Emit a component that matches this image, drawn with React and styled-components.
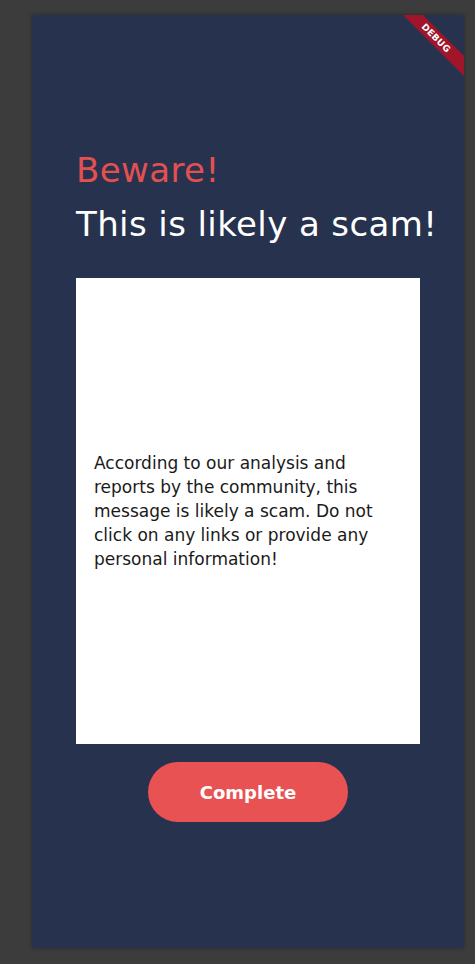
import React from 'react'
import styled, { createGlobalStyle } from 'styled-components'

const Global = createGlobalStyle`
  html, body {
    margin: 0;
    padding: 0;
    background: #3c3c3c;
  }
  body {
    font-family: "DejaVu Sans", "Noto Sans", sans-serif;
    height: 964px;
    overflow: hidden;
  }
`

const Screen = styled.div`
  position: relative;
  box-sizing: border-box;
  margin: 15px 11px 0 32px;
  height: 933px;
  background: #26324e;
  box-shadow: 0 0 4px rgba(0, 0, 0, 0.35);
  overflow: hidden;
  padding: 128px 44px 0;
  display: flex;
  flex-direction: column;
`

const Banner = styled.div`
  position: absolute;
  top: 16px;
  right: -22px;
  width: 100px;
  height: 14px;
  background: #a0152a;
  transform: rotate(45deg);
  color: #fff;
  font-family: "DejaVu Sans", sans-serif;
  font-weight: 700;
  font-size: 9px;
  line-height: 14px;
  text-align: center;
  letter-spacing: 0.3px;
`

const Title = styled.h1`
  margin: 0;
  font-weight: 400;
  font-size: 34px;
  line-height: 54px;
  letter-spacing: 0.4px;
  color: ${p => p.$tone};
  white-space: nowrap;
`

const Card = styled.div`
  margin-top: 27px;
  height: 466px;
  background: #fff;
  box-sizing: border-box;
  padding: 0 18px;
  display: flex;
  align-items: center;
`

const Body = styled.p`
  margin: 0;
  font-size: 17px;
  line-height: 24px;
  color: #1a1a1a;
  white-space: nowrap;
`

const Button = styled.button`
  align-self: center;
  margin-top: 18px;
  width: 200px;
  height: 60px;
  border: none;
  border-radius: 30px;
  background: #e85252;
  color: #fff;
  font-family: "DejaVu Sans", sans-serif;
  font-weight: 700;
  font-size: 18px;
`

const lines = [
  'According to our analysis and',
  'reports by the community, this',
  'message is likely a scam. Do not',
  'click on any links or provide any',
  'personal information!',
]

export default function App() {
  return (
    <>
      <Global />
      <Screen>
        <Banner>DEBUG</Banner>
        <Title $tone="#e45050">Beware!</Title>
        <Title $tone="#ffffff">This is likely a scam!</Title>
        <Card>
          <Body>
            {lines.map((l, i) => (
              <React.Fragment key={i}>
                {l}
                {i < lines.length - 1 && <br />}
              </React.Fragment>
            ))}
          </Body>
        </Card>
        <Button>Complete</Button>
      </Screen>
    </>
  )
}
